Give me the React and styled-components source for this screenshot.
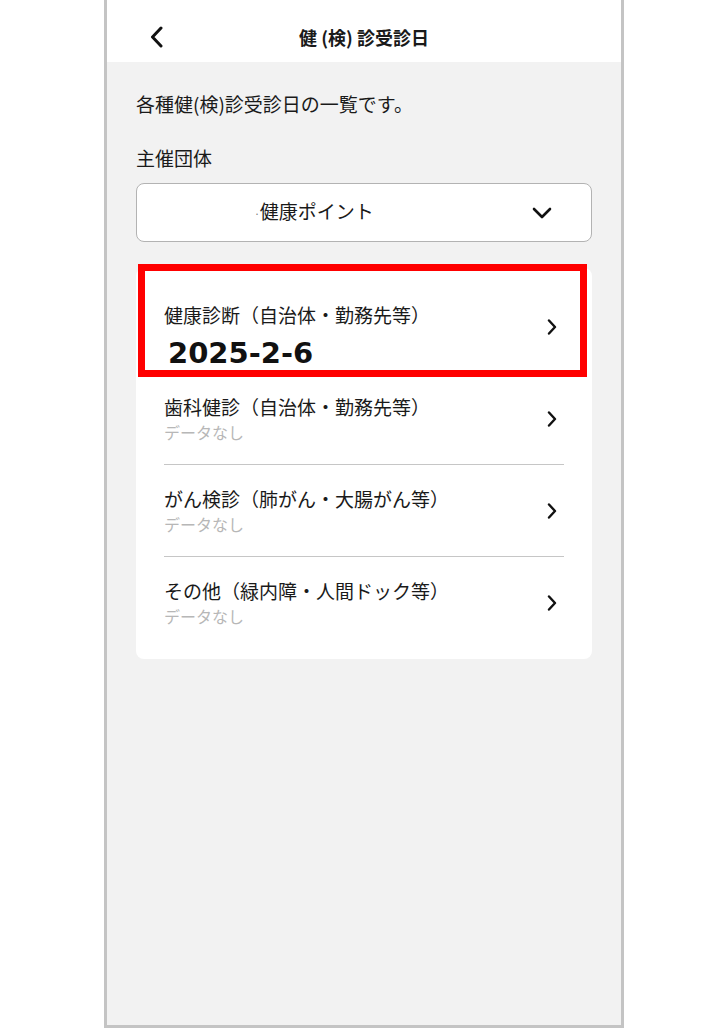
import React from 'react';
import styled, { createGlobalStyle } from 'styled-components';

const GlobalStyle = createGlobalStyle`
  html, body {
    margin: 0;
    padding: 0;
    background: #ffffff;
  }
  * {
    box-sizing: border-box;
  }
`;

const Page = styled.div`
  width: 728px;
  height: 1028px;
  display: flex;
  justify-content: center;
  font-family: "Noto Sans CJK JP", "Noto Sans", sans-serif;
  color: #1a1a1a;
`;

const Phone = styled.div`
  width: 520px;
  height: 1028px;
  border: 3px solid #c4c4c4;
  border-top: none;
  background: #f2f2f2;
  display: flex;
  flex-direction: column;
`;

const Header = styled.header`
  height: 62px;
  background: #ffffff;
  display: grid;
  grid-template-columns: 1fr auto 1fr;
  align-items: center;
  padding: 12px 42px 0;
`;

const BackButton = styled.button`
  justify-self: start;
  width: 16px;
  height: 24px;
  padding: 0;
  border: none;
  background: none;
  display: flex;
  align-items: center;
  justify-content: flex-start;
`;

const Title = styled.h1`
  margin: 0;
  font-size: 18px;
  font-weight: 700;
  line-height: 26px;
  color: #1a1a1a;
`;

const Content = styled.main`
  padding: 29px 29px 0;
  display: flex;
  flex-direction: column;
`;

const Lead = styled.p`
  margin: 0;
  font-size: 19px;
  line-height: 26px;
`;

const Label = styled.div`
  margin-top: 28px;
  font-size: 19px;
  line-height: 26px;
`;

const Select = styled.div`
  margin-top: 12px;
  height: 59px;
  background: #ffffff;
  border: 1px solid #b3b3b3;
  border-radius: 8px;
  display: flex;
  align-items: center;
  padding: 0 39px 0 16px;
`;

const SelectValue = styled.span`
  flex: 1;
  text-align: center;
  padding-right: 57px;
  font-size: 19px;
  line-height: 26px;
`;

const Dot = styled.span`
  font-size: 10px;
  color: #777;
  vertical-align: middle;
`;

const Card = styled.section`
  position: relative;
  margin-top: 26px;
  background: #ffffff;
  border-radius: 8px;
  padding: 13px 28px 10px;
`;

const Row = styled.div`
  display: flex;
  align-items: center;
  padding: 21px 7px 21px 0;
  border-bottom: 1px solid ${(p) => (p.$plain ? 'transparent' : '#c6c6c6')};
`;

const RowText = styled.div`
  flex: 1;
  display: flex;
  flex-direction: column;
`;

const RowTitle = styled.div`
  font-size: 19px;
  line-height: 26px;
  color: #1a1a1a;
`;

const RowSub = styled.div`
  margin-top: 1px;
  font-size: 16px;
  line-height: 22px;
  color: #b7b7b7;
`;

/* the date is written over the row as an annotation, a little below the sub line */
const RowDate = styled.div`
  position: relative;
  top: 13px;
  margin-top: 1px;
  padding-left: 4px;
  font-family: "DejaVu Sans", sans-serif;
  font-size: 29px;
  font-weight: 700;
  line-height: 22px;
  color: #111;
`;

const Highlight = styled.div`
  position: absolute;
  top: -4px;
  left: 2px;
  width: 449px;
  height: 113px;
  border: 7px solid #ff0000;
  pointer-events: none;
`;

const ChevronLeft = () => (
  <svg width="15" height="22" viewBox="0 0 15 22" fill="none">
    <polyline points="12,2 3.5,11 12,20" stroke="#111" strokeWidth="3" strokeLinecap="round" strokeLinejoin="round" />
  </svg>
);

const ChevronDown = () => (
  <svg width="20" height="12" viewBox="0 0 20 12" fill="none">
    <polyline points="2,2 10,10 18,2" stroke="#111" strokeWidth="2.6" strokeLinecap="round" strokeLinejoin="round" />
  </svg>
);

const ChevronRight = () => (
  <svg width="10" height="16" viewBox="0 0 10 16" fill="none">
    <polyline points="2,1.5 8,8 2,14.5" stroke="#111" strokeWidth="2.4" strokeLinecap="round" strokeLinejoin="round" />
  </svg>
);

const items = [
  { title: '健康診断（自治体・勤務先等）', date: '2025-2-6' },
  { title: '歯科健診（自治体・勤務先等）', sub: 'データなし' },
  { title: 'がん検診（肺がん・大腸がん等）', sub: 'データなし' },
  { title: 'その他（緑内障・人間ドック等）', sub: 'データなし' },
];

export default function App() {
  return (
    <>
      <GlobalStyle />
      <Page>
        <Phone>
          <Header>
            <BackButton aria-label="戻る">
              <ChevronLeft />
            </BackButton>
            <Title>健 (検) 診受診日</Title>
            <span />
          </Header>
          <Content>
            <Lead>各種健(検)診受診日の一覧です。</Lead>
            <Label>主催団体</Label>
            <Select>
              <SelectValue>
                <Dot>·</Dot>健康ポイント
              </SelectValue>
              <ChevronDown />
            </Select>
            <Card>
              {items.map((item, i) => (
                <Row key={item.title} $plain={!!item.date || i === items.length - 1}>
                  <RowText>
                    <RowTitle>{item.title}</RowTitle>
                    {item.date ? <RowDate>{item.date}</RowDate> : <RowSub>{item.sub}</RowSub>}
                  </RowText>
                  <ChevronRight />
                </Row>
              ))}
              <Highlight />
            </Card>
          </Content>
        </Phone>
      </Page>
    </>
  );
}
